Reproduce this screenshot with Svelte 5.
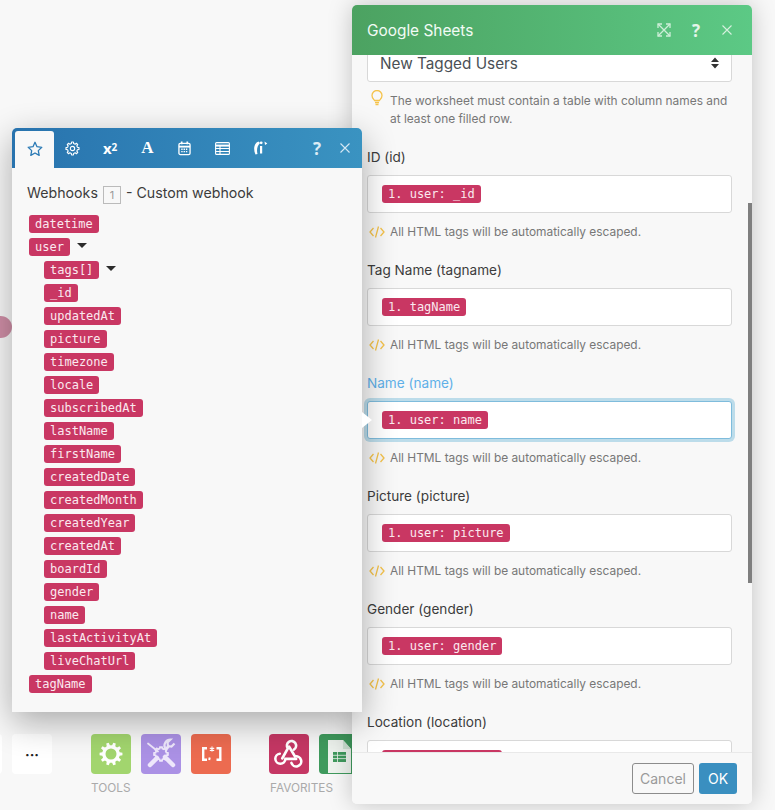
<script>
  const tree = [
    ['datetime', 0], ['user', 0, true], ['tags[]', 1, true], ['_id', 1], ['updatedAt', 1], ['picture', 1],
    ['timezone', 1], ['locale', 1], ['subscribedAt', 1], ['lastName', 1], ['firstName', 1], ['createdDate', 1],
    ['createdMonth', 1], ['createdYear', 1], ['createdAt', 1], ['boardId', 1], ['gender', 1], ['name', 1],
    ['lastActivityAt', 1], ['liveChatUrl', 1], ['tagName', 0]
  ];
  const fields = [
    ['ID (id)', '1. user: _id'],
    ['Tag Name (tagname)', '1. tagName'],
    ['Name (name)', '1. user: name', true],
    ['Picture (picture)', '1. user: picture'],
    ['Gender (gender)', '1. user: gender'],
    ['Location (location)', '1. user: locale']
  ];
  function gear(cx, cy, ro, ri, teeth) {
    const pts = [];
    const step = (Math.PI * 2) / teeth;
    for (let i = 0; i < teeth; i++) {
      const a = i * step;
      const w = step * 0.24;
      pts.push([a - w * 1.25, ri], [a - w * 0.75, ro], [a + w * 0.75, ro], [a + w * 1.25, ri]);
    }
    return 'M' + pts.map(([a, r]) => `${(cx + r * Math.cos(a)).toFixed(2)} ${(cy + r * Math.sin(a)).toFixed(2)}`).join('L') + 'Z';
  }
  const holeGear = gear(20, 20, 11.5, 8.8, 10) + ' M20 14.500a5.500 5.500 0 1 0 0 11 5.500 5.500 0 0 0 0-11z';
  const tabGear = gear(8, 8, 7, 5.4, 8);
  const ringGear = gear(20, 20, 7, 5.6, 8);
</script>

<div class="canvas">
  <div class="node"></div>

  <div class="dock">
    <div class="tile more">···</div>
    <div class="tile edge"></div>
    <div class="group tools">
      <div class="icons">
        <div class="tile green">
          <svg viewBox="0 0 40 40" width="40" height="40"><path fill="#fff" fill-rule="evenodd" d={holeGear}/></svg>
        </div>
        <div class="tile purple">
          <svg viewBox="0 0 40 40" width="40" height="40" fill="none" stroke="#eee7fb">
            <path d="M7 9.500l10 8" stroke-width="1.800" stroke-linecap="round"/>
            <path d="M24 23l8 8" stroke-width="4.500" stroke-linecap="round"/>
            <path d="M16 24L9 31" stroke-width="4.500" stroke-linecap="round"/>
            <path d="M24 16l3.500-3.500" stroke-width="3"/>
            <path d="M33.500 9.500l-3 3-3.500-.5-.5-3.500 3-3a6 6 0 0 0-5.500 8.500" stroke-width="2.200"/>
            <path d={ringGear} stroke-width="1.800"/>
          </svg>
        </div>
        <div class="tile orange">
          <svg viewBox="0 0 40 40" width="40" height="40" fill="none" stroke="#fff" stroke-width="2.400"><path d="M16 14.200h-3.800v11.600H16M25.500 14.200h3.800v11.600h-3.800"/><path d="M21 12.500v5M18.800 14l4.400 2.500M23.200 14l-4.400 2.500" stroke-width="1.200"/><path d="M18.700 23.500l-.5 2.500" stroke-width="2"/></svg>
        </div>
      </div>
      <span>TOOLS</span>
    </div>
    <div class="group favorites">
      <div class="icons">
        <div class="tile rose">
          <svg viewBox="0 0 40 40" width="40" height="40" fill="none" stroke="#fff" stroke-width="3.200" stroke-linecap="round"><g transform="translate(4 2.500) scale(.8)"><path d="M11.500 27.500l7-12.500A5.800 5.800 0 1 1 26 16.500"/><path d="M20 12.500L27.500 25A6.300 6.300 0 1 1 23 33"/><path d="M29 28H15.500A6.300 6.300 0 1 1 8.500 21.500"/></g></svg>
        </div>
        <div class="tile sheets">
          <svg viewBox="0 0 40 40" width="40" height="40"><path fill="#eef3ee" d="M9 6h15l8 9v24H9z"/><path fill="#cfe3d4" d="M24 6l8 9h-8z"/><rect x="14" y="18" width="13" height="10" fill="#3f9a5d"/><path stroke="#eef3ee" stroke-width=".8" d="M14 21.300h13M14 24.600h13M18.500 18v10"/></svg>
        </div>
      </div>
      <span>FAVORITES</span>
    </div>
  </div>

  <section class="panel sheets-panel">
    <header class="sheet-head">
      <h1>Google Sheets</h1>
      <div class="head-icons">
        <svg viewBox="0 0 14 14" width="14" height="14" fill="none" stroke="#cdeed8" stroke-width="1.300"><path d="M1 1l12 12M13 1L1 13"/><path d="M1 5V1h4M9 1h4v4M13 9v4H9M5 13H1V9"/></svg>
        <span class="q">?</span>
        <svg viewBox="0 0 12 12" width="12" height="12" fill="none" stroke="#d5f0de" stroke-width="1.100"><path d="M1.500 1.500l9 9M10.500 1.500l-9 9"/></svg>
      </div>
    </header>
    <div class="sheet-body">
      <div class="select">
        <span>New Tagged Users</span>
        <svg viewBox="0 0 8 12" width="8" height="12" fill="#333"><path d="M4 0.500L8 5H0zM4 11.500L0 7h8z"/></svg>
      </div>
      <div class="hint bulb">
        <svg viewBox="0 0 12 16" width="12" height="16" fill="none" stroke="#f5c34b" stroke-width="1.300"><path d="M3.500 10.500C2.500 9 1 8 1 5.500a5 5 0 0 1 10 0C11 8 9.500 9 8.500 10.500z"/><path d="M4 12.500h4M4.500 14.500h3" stroke-width="1.500"/></svg>
        <p>The worksheet must contain a table with column names and at least one filled row.</p>
      </div>
      {#each fields as f}
        <div class="field" class:active={f[2]}>
          <label>{f[0]}</label>
          <div class="input"><span class="tag">{f[1]}</span></div>
          <div class="hint code">
            <svg viewBox="0 0 16 14" width="16" height="14" fill="none" stroke="#f5c34b" stroke-width="1.300"><path d="M4.500 3L1 7l3.500 4M11.500 3L15 7l-3.500 4M9.500 1.500l-3 11"/></svg>
            <p>All HTML tags will be automatically escaped.</p>
          </div>
        </div>
      {/each}
    </div>
    <div class="scrollbar"></div>
    <footer class="sheet-foot">
      <button class="cancel">Cancel</button>
      <button class="ok">OK</button>
    </footer>
  </section>

  <section class="panel mapper">
    <nav class="tabs">
      <div class="tab on">
        <svg viewBox="0 0 16 16" width="16" height="16" fill="none" stroke="#2b7ab5" stroke-width="1.300" stroke-linejoin="round"><path d="M8 1.300l2 4.400 4.800.6-3.500 3.300.9 4.800L8 12l-4.200 2.400.9-4.800L1.200 6.300 6 5.700z"/></svg>
      </div>
      <div class="tab">
        <svg viewBox="0 0 16 16" width="15" height="15" fill="none" stroke="#fff" stroke-width="1.200" stroke-linejoin="round"><path d={tabGear}/><circle cx="8" cy="8" r="2.300"/></svg>
      </div>
      <div class="tab txt mathy">x<sup>2</sup></div>
      <div class="tab txt serif">A</div>
      <div class="tab">
        <svg viewBox="0 0 14 16" width="13" height="15" fill="none" stroke="#fff" stroke-width="1.400"><rect x="1" y="2.500" width="12" height="12" rx="1.500"/><path d="M1 6h12" stroke-width="2"/><path d="M4 .5v3M10 .5v3" stroke-width="1.800"/><path d="M3.500 8.800h7M3.500 11.300h7" stroke-dasharray="1.500 1" stroke-width="1.400"/></svg>
      </div>
      <div class="tab">
        <svg viewBox="0 0 15 13" width="15" height="13" fill="none" stroke="#fff" stroke-width="1.100"><rect x=".6" y=".6" width="13.800" height="11.800" rx="1"/><path d="M.6 3.600h13.800" stroke-width="2"/><path d="M.6 6.500h13.800M.6 9.500h13.800M5 3.600v8.800"/></svg>
      </div>
      <div class="tab">
        <svg viewBox="0 0 16 16" width="16" height="16" fill="#fff"><path d="M6.500 1.500C2 3 1 9 3.500 14.500L5.500 14C4.500 10 5 6 8 3z"/><rect x="8" y="6" width="2.200" height="7.500"/><circle cx="9.200" cy="2.800" r="1.400"/><path d="M12.500 1.500l2.800 2-2.300 1.500z"/></svg>
      </div>
      <div class="tab-right">
        <span class="q">?</span>
        <svg viewBox="0 0 12 12" width="12" height="12" fill="none" stroke="#d6e8f4" stroke-width="1.100"><path d="M1.500 1.500l9 9M10.500 1.500l-9 9"/></svg>
      </div>
    </nav>
    <div class="mapper-body">
      <h2>Webhooks <span class="num">1</span> - Custom webhook</h2>
      <ul>
        {#each tree as t}
          <li class:deep={t[1]}>
            <span class="tag">{t[0]}</span>
            {#if t[2]}<i class="caret"></i>{/if}
          </li>
        {/each}
      </ul>
    </div>
  </section>

  <div class="pointer"></div>
</div>

<style>
  :global(body) { margin: 0; background: #f8f8f8; }
  .canvas {
    position: relative;
    width: 775px;
    height: 810px;
    overflow: hidden;
    background: #f8f8f8;
    font-family: Inter, "Noto Sans", sans-serif;
    color: #3a3a3a;
  }
  .node {
    position: absolute;
    left: -11px;
    top: 316px;
    width: 23px;
    height: 22px;
    border-radius: 50%;
    background: #cf8ea6;
  }
  .dock {
    position: absolute;
    left: 0;
    top: 734px;
    width: 352px;
    height: 76px;
  }
  .tile {
    position: absolute;
    width: 40px;
    height: 40px;
    border-radius: 4px;
    display: flex;
    align-items: center;
    justify-content: center;
    overflow: hidden;
  }
  .more {
    left: 12px;
    top: 0;
    background: #fff;
    color: #222;
    font-size: 14px;
    font-weight: 700;
  }
  .edge { left: -38px; top: 0; background: #fff; }
  .group { position: absolute; top: 0; height: 76px; }
  .group span {
    position: absolute;
    left: 0;
    top: 47px;
    font-size: 11.800px;
    color: #aaa;
    white-space: nowrap;
  }
  .tools { left: 91px; }
  .favorites { left: 269px; }
  .favorites span { left: 1px; }
  .tile.green { left: 0; background: #a2d56e; }
  .tile.purple { left: 50px; background: #ab91e5; }
  .tile.orange { left: 100px; background: #ec6b50; }
  .tile.rose { left: 0; background: #c53764; }
  .tile.sheets { left: 50px; background: #3f9a5d; }

  .panel { position: absolute; background: #f8f8f8; }
  .sheets-panel {
    left: 352px;
    top: 5px;
    width: 400px;
    height: 799px;
    border-radius: 5px;
    display: flex;
    flex-direction: column;
    overflow: hidden;
    box-shadow: 0 0 24px rgba(0, 0, 0, .22);
  }
  .sheet-head {
    flex: 0 0 50px;
    display: flex;
    align-items: center;
    justify-content: space-between;
    padding: 0 19px 0 15px;
    background: linear-gradient(90deg, #4ca261, #5cc985);
    color: #fff;
    position: relative;
    z-index: 2;
  }
  h1 { margin: 0; font-size: 15.400px; font-weight: 400; color: #f2fbf5; }
  .head-icons { display: flex; align-items: center; gap: 21px; }
  .q { font-weight: 700; font-size: 17px; line-height: 1; color: #e4f5ea; font-family: "Open Sans", sans-serif; }
  .sheet-body {
    flex: 1 1 auto;
    min-height: 0;
    overflow: hidden;
    padding: 0 20px 0 15px;
  }
  .select {
    margin-top: -11px;
    height: 38px;
    box-sizing: border-box;
    background: #fff;
    border: 1px solid #d8d8d8;
    border-radius: 3px;
    display: flex;
    align-items: center;
    justify-content: space-between;
    padding: 0 12px;
    font-size: 15.300px;
    color: #4a4f55;
  }
  .hint {
    display: flex;
    gap: 7px;
    font-size: 11.900px;
    line-height: 18px;
    color: #777;
  }
  .hint p { margin: 0; }
  .hint.bulb { margin: 10px 0 0 4px; }
  .hint.bulb svg { flex: none; margin-top: -2px; }
  .hint.bulb p { width: 345px; }
  .hint.code { margin: 10px 0 0 2px; align-items: center; gap: 5px; }
  .field { margin-top: 20px; }
  label { display: block; font-size: 13.600px; line-height: 18px; color: #3c3c3c; margin-bottom: 9px; }
  .active label { color: #5fb0e8; }
  .input {
    height: 38px;
    box-sizing: border-box;
    background: #fff;
    border: 1px solid #d8d8d8;
    border-radius: 3px;
    display: flex;
    align-items: center;
    padding-left: 14px;
  }
  .active .input {
    border-color: #7fbcdc;
    box-shadow: 0 0 0 3px #bcdcea;
  }
  .tag {
    display: inline-block;
    background: #c93763;
    color: #fbe9ef;
    border-radius: 3px;
    padding: 0 6px;
    height: 18px;
    line-height: 18px;
    font-family: "DejaVu Sans Mono", monospace;
    font-size: 12px;
    white-space: nowrap;
  }
  .scrollbar {
    position: absolute;
    right: 0;
    top: 198px;
    width: 4px;
    height: 380px;
    background: #7f7f7f;
    z-index: 1;
  }
  .sheet-foot {
    flex: 0 0 52px;
    box-sizing: border-box;
    border-top: 1px solid #e9e9e9;
    background: #f8f8f8;
    display: flex;
    justify-content: flex-end;
    gap: 5px;
    padding: 10px 15px 0 0;
    position: relative;
    z-index: 2;
  }
  button {
    height: 31px;
    border-radius: 3px;
    font-family: inherit;
    font-size: 14px;
    padding: 0;
    box-sizing: border-box;
  }
  .cancel { width: 62px; background: transparent; border: 1px solid #8c8c8c; color: #9a9a9a; }
  .ok { width: 38px; background: #3a8fc0; border: none; color: #fff; }

  .mapper {
    left: 12px;
    top: 128px;
    width: 350px;
    height: 584px;
    border-radius: 5px 5px 0 0;
    box-shadow: 0 10px 34px rgba(0, 0, 0, .32);
  }
  .tabs {
    height: 40px;
    border-radius: 5px 5px 0 0;
    background: linear-gradient(90deg, #2873ae, #3a93c1);
    display: flex;
    align-items: flex-end;
    padding-left: 3px;
  }
  .tab {
    width: 37.400px;
    height: 37px;
    display: flex;
    align-items: center;
    justify-content: center;
    color: #fff;
    padding-bottom: 3px;
    box-sizing: border-box;
  }
  .tab.on { width: 39px; background: #f8f8f8; border-radius: 3px 3px 0 0; padding-bottom: 1px; }
  .tab.txt { font-weight: 700; }
  .mathy { font-size: 15px; font-family: "Open Sans", sans-serif; }
  .mathy sup { font-size: 10px; line-height: 0; position: relative; top: -1px; }
  .serif { font-size: 17px; font-family: "Liberation Serif", serif; }
  .tab-right {
    margin-left: auto;
    height: 37px;
    padding: 0 11px 3px 0;
    box-sizing: border-box;
    display: flex;
    align-items: center;
    gap: 18px;
  }
  .tab-right .q { color: #dcebf5; }
  .mapper-body { padding: 16px 15px 0; }
  h2 {
    margin: 0 0 8px;
    font-size: 14.200px;
    line-height: 18px;
    font-weight: 400;
    color: #3c3c3c;
    white-space: nowrap;
  }
  .num {
    display: inline-block;
    box-sizing: border-box;
    width: 18px;
    height: 18px;
    line-height: 16px;
    border: 1px solid #bbb;
    text-align: center;
    font-size: 11px;
    color: #999;
    margin: 0 1px;
    vertical-align: -1px;
  }
  ul { list-style: none; margin: 0; padding: 0 0 0 2px; }
  li { height: 23px; display: flex; align-items: center; }
  li.deep { padding-left: 15px; }
  .caret {
    margin-left: 7px;
    margin-bottom: 3px;
    width: 0;
    height: 0;
    border-left: 5px solid transparent;
    border-right: 5px solid transparent;
    border-top: 5px solid #2c2c2c;
  }
  .pointer {
    position: absolute;
    left: 362px;
    top: 412px;
    width: 0;
    height: 0;
    border-top: 8px solid transparent;
    border-bottom: 8px solid transparent;
    border-left: 10px solid #fff;
  }
</style>
